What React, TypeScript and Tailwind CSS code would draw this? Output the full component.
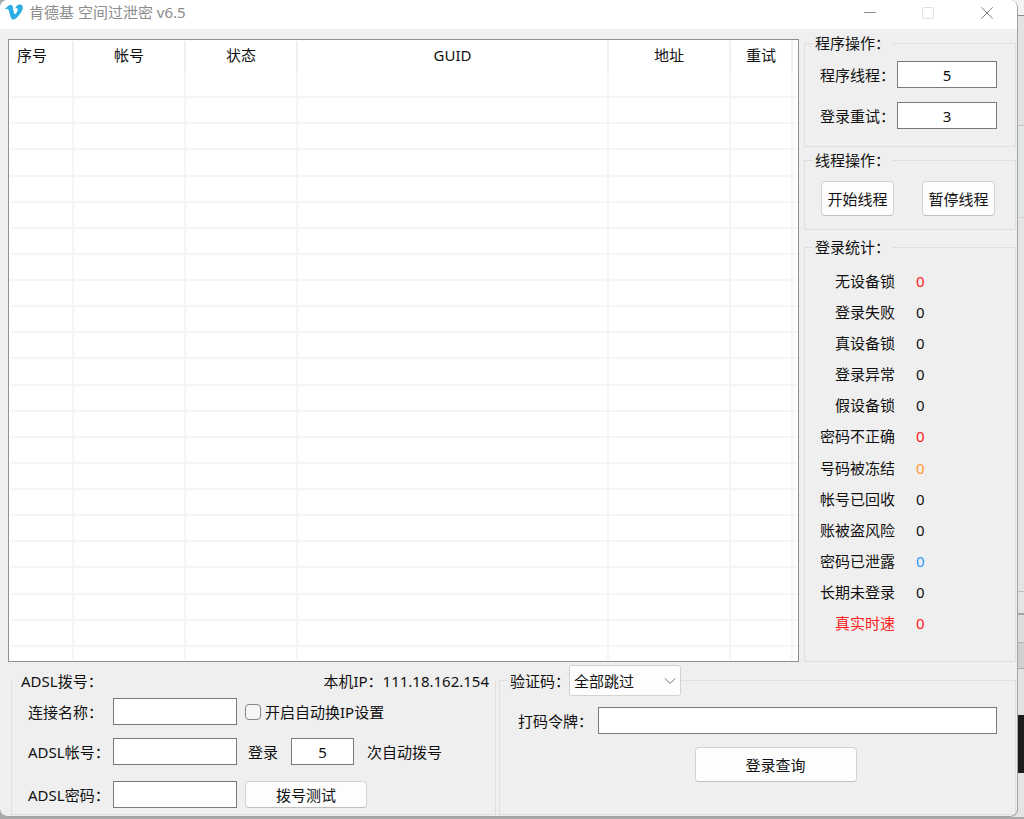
// App.tsx
import type { ReactNode } from "react";
import { FaVimeoV } from "react-icons/fa";

const columns = [
  { label: "序号", width: "w-[64px]", align: "text-left pl-[7px]" },
  { label: "帐号", width: "w-[112px]", align: "text-center" },
  { label: "状态", width: "w-[112px]", align: "text-center" },
  { label: "GUID", width: "w-auto", align: "text-center" },
  { label: "地址", width: "w-[122px]", align: "text-center" },
  { label: "重试", width: "w-[62px]", align: "text-center" },
];

const stats = [
  { label: "无设备锁", color: "text-[#ff2020]" },
  { label: "登录失败" },
  { label: "真设备锁" },
  { label: "登录异常" },
  { label: "假设备锁" },
  { label: "密码不正确", color: "text-[#ff2020]" },
  { label: "号码被冻结", color: "text-[#ff962d]" },
  { label: "帐号已回收" },
  { label: "账被盗风险" },
  { label: "密码已泄露", color: "text-[#2b95ff]" },
  { label: "长期未登录" },
  { label: "真实时速", color: "text-[#ff2020]", labelColor: "text-[#ff2020]" },
];

const inputClass = "h-[27px] border border-[#7a7a7a] bg-white outline-none";
const buttonClass = "rounded border border-[#d2d2d2] border-b-[#bfbfbf] bg-[#fdfdfd] text-center";

function Group({ title, className = "", children }: { title: string; className?: string; children: ReactNode }) {
  return (
    <fieldset className={`min-w-0 border border-[#dfdfdf] ${className}`}>
      <legend className="ml-2 h-5 px-[2px] leading-5">{title}</legend>
      {children}
    </fieldset>
  );
}

function TitleBar() {
  return (
    <header className="flex h-[29px] items-start bg-white pl-1 text-[#8c8c8c]">
      <FaVimeoV className="mt-[2px] size-5 text-[#2aaee4]" />
      <h1 className="ml-[5px] flex-1 leading-[25px]">肯德基 空间过泄密 v6.5</h1>
      <button type="button" aria-label="最小化" className="flex h-[25px] w-[58px] items-center justify-center">
        <svg width="12" height="12" viewBox="0 0 12 12" stroke="#8c8c8c">
          <path d="M0 5.5h12" />
        </svg>
      </button>
      <button type="button" aria-label="最大化" disabled className="flex h-[25px] w-[58px] items-center justify-center">
        <svg width="12" height="12" viewBox="0 0 12 12" fill="none" stroke="#e2e2e2">
          <rect x="0.5" y="0.5" width="11" height="11" rx="1" />
        </svg>
      </button>
      <button type="button" aria-label="关闭" className="flex h-[25px] w-[60px] items-center justify-center">
        <svg width="12" height="12" viewBox="0 0 12 12" stroke="#808080">
          <path d="M0.3 0.3l11.4 11.4M11.7 0.3L0.3 11.7" />
        </svg>
      </button>
    </header>
  );
}

function AccountTable() {
  return (
    <div className="mt-[6px] border border-[#8d9097] bg-white p-px">
      <table className="h-full w-full table-fixed border-separate border-spacing-0">
        <thead>
          <tr className="h-[31px]">
            {columns.map((c) => (
              <th key={c.label} className={`border-r-2 border-[#efefef] pb-[3px] font-normal ${c.width} ${c.align}`}>
                {c.label}
              </th>
            ))}
            <td className="w-1" />
          </tr>
        </thead>
        <tbody>
          {Array.from({ length: 22 }, (_, i) => (
            <tr key={i} className="h-[26px]">
              {columns.map((c) => (
                <td key={c.label} className="border-r-2 border-b-2 border-[#f5f5f5]" />
              ))}
              <td className="border-b-2 border-[#f5f5f5]" />
            </tr>
          ))}
          <tr className="h-[13px]">
            {columns.map((c) => (
              <td key={c.label} className="border-r-2 border-[#f5f5f5]" />
            ))}
            <td />
          </tr>
        </tbody>
      </table>
    </div>
  );
}

function Sidebar() {
  return (
    <aside className="flex flex-col">
      <Group title="程序操作：">
        <div className="flex flex-col gap-[14px] pt-2 pb-[17px] pl-[15px]">
          <div className="flex items-center">
            <label htmlFor="threads" className="w-[77px]">程序线程：</label>
            <input id="threads" defaultValue="5" className={`w-[100px] text-center ${inputClass}`} />
          </div>
          <div className="flex items-center">
            <label htmlFor="retries" className="w-[77px]">登录重试：</label>
            <input id="retries" defaultValue="3" className={`w-[100px] text-center ${inputClass}`} />
          </div>
        </div>
      </Group>

      <Group title="线程操作：" className="mt-[3px]">
        <div className="flex gap-7 pt-[11px] pb-[13px] pl-4">
          <button type="button" className={`h-[35px] w-[73px] ${buttonClass}`}>开始线程</button>
          <button type="button" className={`h-[35px] w-[73px] ${buttonClass}`}>暂停线程</button>
        </div>
      </Group>

      <Group title="登录统计：" className="mt-[7px]">
        <dl className="flex h-[404px] flex-col justify-between pt-2 pb-[22px]">
          {stats.map((s) => (
            <div key={s.label} className="flex h-[31px] items-center">
              <dt className={`w-[90px] text-right ${s.labelColor ?? ""}`}>{s.label}</dt>
              <dd className={`ml-[21px] ${s.color ?? ""}`}>0</dd>
            </div>
          ))}
        </dl>
      </Group>
    </aside>
  );
}

function DialPanel() {
  return (
    <fieldset className="min-w-0 border border-[#dfdfdf] pt-[2px] pb-[6px]">
      <legend className="w-full px-1">
        <span className="flex h-[31px] items-center justify-between pr-[2px] pl-[5px]">
          <span>ADSL拨号：</span>
          <span>本机IP：111.18.162.154</span>
        </span>
      </legend>
      <div className="flex items-center pl-4">
        <label htmlFor="conn" className="w-[85px]">连接名称：</label>
        <input id="conn" className={`w-[124px] ${inputClass}`} />
        <label className="ml-2 flex items-center gap-1">
          <input type="checkbox" className="size-4 appearance-none rounded border border-[#858585] bg-[#f6f6f6]" />
          开启自动换IP设置
        </label>
      </div>
      <div className="mt-[13px] flex items-center pl-4">
        <label htmlFor="account" className="w-[85px]">ADSL帐号：</label>
        <input id="account" className={`w-[124px] ${inputClass}`} />
        <label htmlFor="redial" className="ml-[11px]">登录</label>
        <input id="redial" defaultValue="5" className={`ml-[13px] w-[63px] text-center ${inputClass}`} />
        <span className="ml-[13px]">次自动拨号</span>
      </div>
      <div className="mt-4 flex items-center pl-4">
        <label htmlFor="password" className="w-[85px]">ADSL密码：</label>
        <input id="password" className={`w-[124px] ${inputClass}`} />
        <button type="button" className={`ml-2 h-[27px] w-[122px] ${buttonClass}`}>拨号测试</button>
      </div>
    </fieldset>
  );
}

function CaptchaPanel() {
  return (
    <fieldset className="min-w-0 border border-[#dfdfdf]">
      <legend className="ml-2 pl-[2px]">
        <span className="flex h-[31px] items-center">
          <label htmlFor="captcha" className="w-[59px] whitespace-nowrap">验证码：</label>
          <span className="relative">
            <select id="captcha" className="h-[31px] w-[112px] appearance-none rounded-[3px] border border-[#d2d2d2] bg-[#fdfdfd] pl-1 outline-none">
              <option>全部跳过</option>
            </select>
            <svg className="pointer-events-none absolute top-3 right-[5px]" width="12" height="8" viewBox="0 0 12 8" fill="none" stroke="#707070">
              <path d="M1 1.5l5 5 5-5" />
            </svg>
          </span>
        </span>
      </legend>
      <div className="px-[18px] pt-[11px]">
        <div className="flex items-center">
          <label htmlFor="token" className="w-[80px]">打码令牌：</label>
          <input id="token" className={`min-w-0 flex-1 ${inputClass}`} />
        </div>
        <div className="mt-[13px] flex justify-center pl-9">
          <button type="button" className={`h-[35px] w-[162px] ${buttonClass}`}>登录查询</button>
        </div>
      </div>
    </fieldset>
  );
}

// slivers of the windows lying behind this one
function BackdropEdge() {
  return (
    <div className="-ml-2 flex w-[14px] flex-col bg-[#e4e4e4]">
      <div className="h-4 border-b border-[#8a8a8a] bg-[#f3f3f3]" />
      <div className="h-[110px] border-b border-[#bfc2c2] bg-[#e2e2e2]" />
      <div className="h-[92px] border-b border-[#cfcfcf] bg-[#e3e6e6]" />
      <div className="h-[374px] border-b border-[#bdbdbd]" />
      <div className="h-[23px] border-b-2 border-[#a5a5a5]" />
      <div className="h-[28px] border-b border-[#b0b0b0] bg-[#dcdede]" />
      <div className="h-[26px] border-b border-[#a8a8a8] bg-[#cfcfcf]" />
      <div className="h-[46px] bg-[#e2e2e2]" />
      <div className="h-[58px] bg-[#1c1c1c]" />
      <div className="flex-1" />
    </div>
  );
}

export default function App() {
  return (
    <div className="flex min-h-screen flex-col bg-[#a9a9a9] font-['Noto_Sans','Noto_Sans_CJK_SC',sans-serif] text-[15px] leading-5 text-[#111111]">
      <div className="flex flex-1">
        <main className="z-10 min-w-0 flex-1 overflow-hidden rounded-lg border-r border-b border-[#a3a3a3] bg-[#efefef]">
          <TitleBar />
          <div className="grid grid-cols-[1fr_212px] gap-[5px] pt-1 pr-px pl-2">
            <AccountTable />
            <Sidebar />
          </div>
          <div className="mt-[3px] grid grid-cols-[485fr_517fr] gap-[3px] pr-px pb-px pl-[11px]">
            <DialPanel />
            <CaptchaPanel />
          </div>
        </main>
        <BackdropEdge />
      </div>
      <div className="h-[2px]" />
    </div>
  );
}
